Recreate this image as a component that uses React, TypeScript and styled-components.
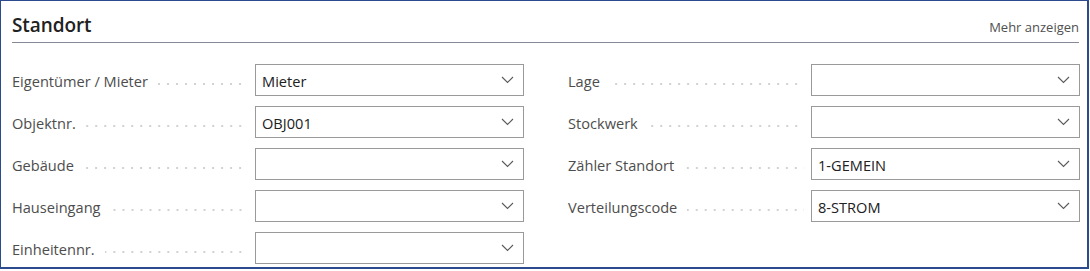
import React from "react";
import styled, { createGlobalStyle } from "styled-components";

const GlobalStyle = createGlobalStyle`
  html, body {
    margin: 0;
    padding: 0;
    background: #ffffff;
  }
  body {
    font-family: "Open Sans", "Noto Sans", "Liberation Sans", sans-serif;
    -webkit-font-smoothing: antialiased;
  }
`;

const Panel = styled.section`
  box-sizing: border-box;
  width: 1089px;
  height: 269px;
  border: 2px solid #2c4a8e;
  border-left-width: 1px;
  border-top-width: 1px;
  box-shadow: 0 1px 1px rgba(0, 0, 0, 0.12);
  background: #ffffff;
  padding: 0 8px 0 11px;
`;

const Header = styled.header`
  display: flex;
  justify-content: space-between;
  align-items: baseline;
  height: 42px;
  box-sizing: border-box;
  padding-top: 11px;
  border-bottom: 1px solid #858b96;
`;

const Title = styled.h2`
  margin: 0;
  font-size: 19px;
  font-weight: 600;
  color: #212121;
  letter-spacing: -0.1px;
  line-height: 26px;
`;

const MoreLink = styled.a`
  font-size: 13px;
  color: #505050;
  text-decoration: none;
  line-height: 18px;
`;

const Grid = styled.div`
  display: grid;
  grid-template-columns: 512px 512px;
  column-gap: 44px;
  padding-top: 21px;
`;

const Column = styled.div`
  display: flex;
  flex-direction: column;
  gap: 10px;
`;

const Row = styled.div`
  display: flex;
  align-items: center;
  height: 32px;
`;

const LabelArea = styled.div`
  display: flex;
  align-items: center;
  width: 243px;
  flex: none;
  height: 100%;
`;

const LabelText = styled.label`
  font-size: 14.6px;
  color: #4d4d4d;
  white-space: nowrap;
  line-height: 20px;
  padding-top: 2px;
`;

const Leader = styled.span`
  flex: 1;
  height: 2px;
  margin: 7px 7px 0 10px;
  background-image: linear-gradient(to right, #d2d2d2 2px, transparent 2px);
  background-size: 9px 2px;
  background-repeat: repeat-x;
  background-position: right center;
`;

const SelectBox = styled.div`
  box-sizing: border-box;
  flex: none;
  width: 269px;
  height: 32px;
  border: 1px solid #9a9a9a;
  display: flex;
  align-items: center;
  justify-content: space-between;
  padding: 0 9px 0 6px;
  background: #ffffff;
`;

const Value = styled.span`
  font-size: 14.6px;
  color: #212121;
  line-height: 20px;
  padding-top: 2px;
`;

const Chevron = () => (
  <svg width="13" height="8" viewBox="0 0 13 8" aria-hidden="true">
    <polyline
      points="1,1 6.5,6.5 12,1"
      fill="none"
      stroke="#5a5a5a"
      strokeWidth="1.1"
    />
  </svg>
);

type FieldProps = { label: string; value?: string };

const Field = ({ label, value = "" }: FieldProps) => (
  <Row>
    <LabelArea>
      <LabelText>{label}</LabelText>
      <Leader />
    </LabelArea>
    <SelectBox>
      <Value>{value}</Value>
      <Chevron />
    </SelectBox>
  </Row>
);

const left: FieldProps[] = [
  { label: "Eigentümer / Mieter", value: "Mieter" },
  { label: "Objektnr.", value: "OBJ001" },
  { label: "Gebäude" },
  { label: "Hauseingang" },
  { label: "Einheitennr." },
];

const right: FieldProps[] = [
  { label: "Lage" },
  { label: "Stockwerk" },
  { label: "Zähler Standort", value: "1-GEMEIN" },
  { label: "Verteilungscode", value: "8-STROM" },
];

export default function App() {
  return (
    <>
      <GlobalStyle />
      <Panel>
        <Header>
          <Title>Standort</Title>
          <MoreLink href="#">Mehr anzeigen</MoreLink>
        </Header>
        <Grid>
          <Column>
            {left.map((f) => (
              <Field key={f.label} {...f} />
            ))}
          </Column>
          <Column>
            {right.map((f) => (
              <Field key={f.label} {...f} />
            ))}
          </Column>
        </Grid>
      </Panel>
    </>
  );
}
